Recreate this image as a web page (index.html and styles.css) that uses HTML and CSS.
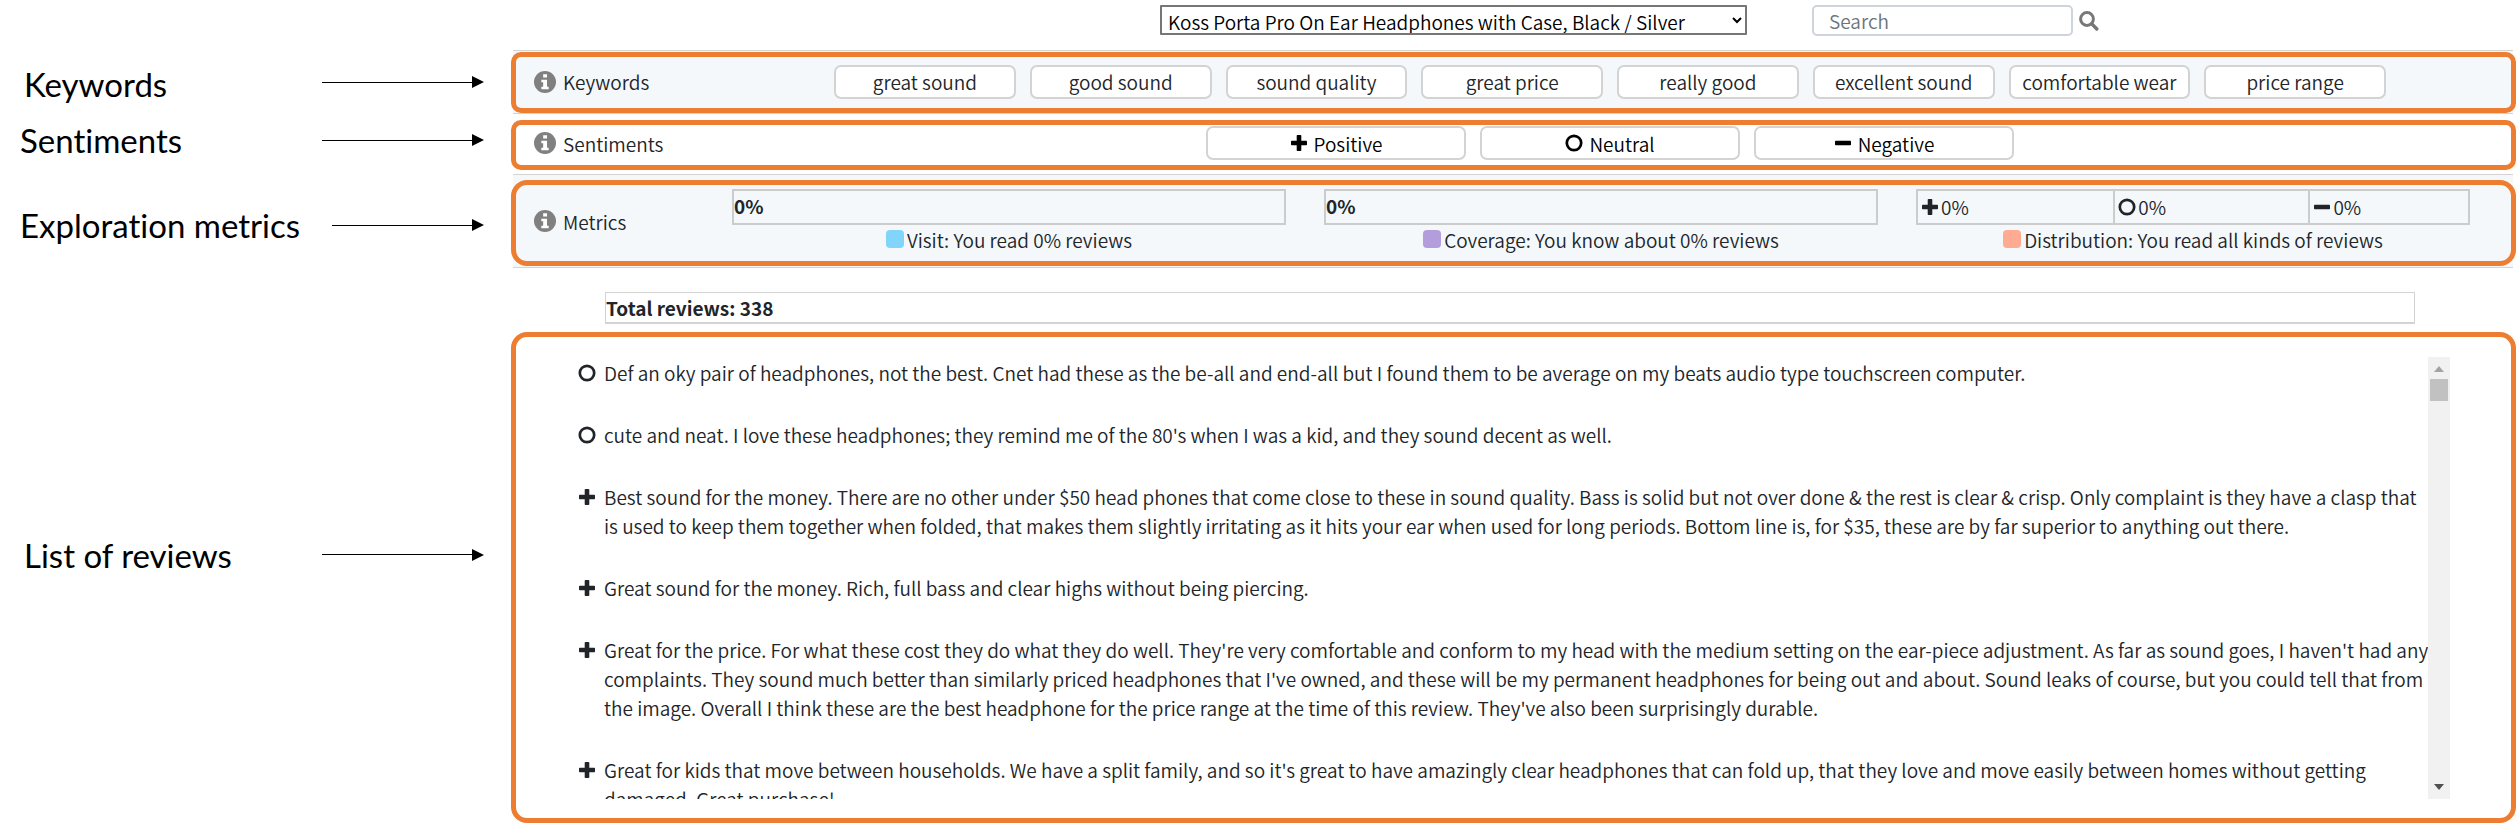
FILE: index.html
```html
<!DOCTYPE html>
<html lang="en">
<head>
<meta charset="utf-8">
<title>Review explorer</title>
<link rel="stylesheet" href="styles.css">
</head>
<body>
<svg class="defs" aria-hidden="true">
  <symbol id="info" viewBox="0 0 24 24"><circle cx="12" cy="12" r="12" fill="#808080"/><path fill="#fff" d="M10 3.5h4.2v3.7H10zM8 9.5h6.2v7.6H16V20H8v-2.9h2v-4.7H8z"/></symbol>
  <symbol id="plus" viewBox="0 0 18 18"><path fill="currentColor" d="M7.5 1h3q.8 0 .8.8v4.9h4.9q.8 0 .8.8v3q0 .8-.8.8h-4.9v4.9q0 .8-.8.8h-3q-.8 0-.8-.8v-4.9H1.8q-.8 0-.8-.8v-3q0-.8.8-.8h4.9V1.8q0-.8.8-.8z"/></symbol>
  <symbol id="ring" viewBox="0 0 18 18"><circle cx="9" cy="9" r="7.2" fill="none" stroke="currentColor" stroke-width="2.7"/></symbol>
  <symbol id="minus" viewBox="0 0 18 18"><rect x="1" y="6.7" width="16" height="4.6" rx=".8" fill="currentColor"/></symbol>
  <symbol id="search" viewBox="0 0 20 20"><circle cx="8" cy="8" r="6.4" fill="none" stroke="#777" stroke-width="3"/><path d="M12.6 12.6l5.2 5.4" stroke="#777" stroke-width="3.4" stroke-linecap="round"/></symbol>
</svg>
<main class="page">
  <header class="topbar">
    <select class="product" aria-label="Product"><option>Koss Porta Pro On Ear Headphones with Case, Black / Silver</option></select>
    <input class="search" type="search" placeholder="Search" aria-label="Search">
    <button class="search-button" aria-label="Search reviews"><svg class="search-icon"><use href="#search"/></svg></button>
  </header>

  <div class="note note-keywords"><span>Keywords</span><i class="arrow"></i></div>
  <section class="band band-keywords">
    <div class="box">
      <h2 class="label"><svg class="info"><use href="#info"/></svg>Keywords</h2>
      <div class="keywords">
        <button class="chip">great sound</button><button class="chip">good sound</button><button class="chip">sound quality</button><button class="chip">great price</button><button class="chip">really good</button><button class="chip">excellent sound</button><button class="chip">comfortable wear</button><button class="chip">price range</button>
      </div>
    </div>
  </section>

  <div class="note note-sentiments"><span>Sentiments</span><i class="arrow"></i></div>
  <section class="band band-sentiments">
    <div class="box">
      <h2 class="label"><svg class="info"><use href="#info"/></svg>Sentiments</h2>
      <div class="sentiments">
        <button class="chip tone"><svg class="mark"><use href="#plus"/></svg>Positive</button><button class="chip tone"><svg class="mark"><use href="#ring"/></svg>Neutral</button><button class="chip tone"><svg class="mark"><use href="#minus"/></svg>Negative</button>
      </div>
    </div>
  </section>

  <div class="note note-metrics"><span>Exploration metrics</span><i class="arrow"></i></div>
  <section class="band band-metrics">
    <div class="box box-round">
      <h2 class="label label-narrow"><svg class="info"><use href="#info"/></svg>Metrics</h2>
      <div class="metrics">
        <div class="metric"><div class="bar"><b>0%</b></div><p class="caption"><i class="swatch blue"></i>Visit: You read 0% reviews</p></div>
        <div class="metric"><div class="bar"><b>0%</b></div><p class="caption"><i class="swatch purple"></i>Coverage: You know about 0% reviews</p></div>
        <div class="metric"><div class="split"><span><svg class="mark"><use href="#plus"/></svg>0%</span><span><svg class="mark"><use href="#ring"/></svg>0%</span><span><svg class="mark"><use href="#minus"/></svg>0%</span></div><p class="caption"><i class="swatch coral"></i>Distribution: You read all kinds of reviews</p></div>
      </div>
    </div>
  </section>

  <div class="total"><b>Total reviews: 338</b></div>

  <div class="note note-reviews"><span>List of reviews</span><i class="arrow"></i></div>
  <section class="reviews">
    <div class="scroller">
      <ul class="list">
        <li class="review"><svg class="mark"><use href="#ring"/></svg><p>Def an oky pair of headphones, not the best. Cnet had these as the be-all and end-all but I found them to be average on my beats audio type touchscreen computer.</p></li>
        <li class="review"><svg class="mark"><use href="#ring"/></svg><p>cute and neat. I love these headphones; they remind me of the 80's when I was a kid, and they sound decent as well.</p></li>
        <li class="review"><svg class="mark"><use href="#plus"/></svg><p>Best sound for the money. There are no other under $50 head phones that come close to these in sound quality. Bass is solid but not over done &amp; the rest is clear &amp; crisp. Only complaint is they have a clasp that<br>is used to keep them together when folded, that makes them slightly irritating as it hits your ear when used for long periods. Bottom line is, for $35, these are by far superior to anything out there.</p></li>
        <li class="review"><svg class="mark"><use href="#plus"/></svg><p>Great sound for the money. Rich, full bass and clear highs without being piercing.</p></li>
        <li class="review"><svg class="mark"><use href="#plus"/></svg><p>Great for the price. For what these cost they do what they do well. They're very comfortable and conform to my head with the medium setting on the ear-piece adjustment. As far as sound goes, I haven't had any<br>complaints. They sound much better than similarly priced headphones that I've owned, and these will be my permanent headphones for being out and about. Sound leaks of course, but you could tell that from<br>the image. Overall I think these are the best headphone for the price range at the time of this review. They've also been surprisingly durable.</p></li>
        <li class="review"><svg class="mark"><use href="#plus"/></svg><p>Great for kids that move between households. We have a split family, and so it's great to have amazingly clear headphones that can fold up, that they love and move easily between homes without getting<br>damaged. Great purchase!</p></li>
      </ul>
      <div class="scrollbar" aria-hidden="true"><i class="up"></i><i class="thumb"></i><i class="down"></i></div>
    </div>
  </section>
</main>
</body>
</html>
```
FILE: styles.css
```css
* { box-sizing: border-box; }
body { margin: 0; background: #fff; color: #212529; font: 350 19px/29px "Noto Sans CJK SC", "Noto Sans", sans-serif; }
h2, p, ul { margin: 0; padding: 0; font-size: inherit; font-weight: inherit; }
button, input, select { font: inherit; color: inherit; }
.defs { position: absolute; width: 0; height: 0; }

.page { display: grid; grid-template-columns: 511px minmax(0, 1fr); }

.topbar { grid-column: 2; display: flex; align-items: flex-start; height: 50px; padding: 5px 0 0 649px; }
.product { width: 587px; height: 30px; padding: 0 2px; border: 2px solid #767676; border-radius: 1px; background: #fff; color: #000; }
.search { width: 261px; height: 31px; margin-left: 65px; padding: 0 15px; border: 2px solid #ced4da; border-radius: 5px; background: #fff; }
.search::placeholder { color: #6c757d; }
.search-button { height: 31px; margin-left: 6px; padding: 0; border: 0; background: none; }
.search-icon { display: block; width: 20px; height: 20px; }

.note { grid-column: 1; display: flex; align-items: center; gap: 20px; padding: 0 27px 0 24px; color: #000; font: 33px/40px Lato, sans-serif; font-variant-ligatures: none; }
.note span { flex: 0 0 auto; }
.note-keywords span { padding-top: 4px; }
.note-sentiments { padding-bottom: 8px; padding-left: 20px; }
.note-metrics { gap: 12px; padding-top: 8px; padding-left: 20px; }
.note-reviews { padding-bottom: 46px; }
.arrow { display: flex; align-items: center; width: 162px; margin-left: auto; }
.note-metrics .arrow { width: 152px; }
.arrow::before { content: ""; flex: 1; height: 1px; background: #000; }
.arrow::after { content: ""; border: 6px solid transparent; border-left: 12px solid #000; border-right: 0; }

.band { grid-column: 2; margin: 0 3px 0 2px; }
.box { display: flex; align-items: center; margin: 0 -3px 0 -2px; padding-left: 18px; border: 5px solid #ed7d31; border-radius: 10px; }
.box-round { border-radius: 16px; }
.band-keywords { padding-top: 1px; border-top: 1px solid #d3d3d3; border-bottom: 1px solid #d3d3d3; background: #f4f8fb; }
.band-keywords .box { height: 61px; padding-bottom: 2px; }
.band-sentiments { padding: 6px 0 4px; }
.band-sentiments .box { height: 50px; padding-bottom: 4px; }
.band-metrics { padding: 5px 0 1px; border-top: 1px solid #d3d3d3; border-bottom: 1px solid #d3d3d3; background: #f4f8fb; }
.band-metrics .box { height: 86px; padding-bottom: 4px; }

.label { flex: 0 0 300px; display: flex; align-items: center; gap: 7px; }
.label-narrow { flex-basis: 198px; }
.info { width: 22px; height: 22px; }
.mark { flex: none; width: 18px; height: 18px; }

.keywords { flex: 1; display: grid; grid-template-columns: repeat(8, minmax(0, 1fr)); gap: 14px; margin-right: 125px; }
.sentiments { flex: 1; display: flex; justify-content: center; gap: 14px; margin-right: 125px; }
.chip { height: 34px; padding: 0; border: 2px solid #d3d3d3; border-radius: 7px; background: #fff; white-space: nowrap; }
.tone { display: flex; align-items: center; justify-content: center; gap: 6px; width: 260px; color: #000; }

.metrics { flex: 1; display: grid; grid-template-columns: repeat(3, minmax(0, 1fr)); gap: 38px; margin-right: 41px; }
.bar, .split { height: 36px; border: 2px solid #ccc; }
.split { display: grid; grid-template-columns: 197fr 197fr 161fr; }
.split span { display: flex; align-items: center; gap: 2px; padding-left: 3px; }
.split span + span { border-left: 2px solid #ccc; }
.caption { display: flex; align-items: center; justify-content: center; gap: 3px; }
.swatch { width: 18px; height: 18px; border-radius: 4px; }
.blue { background: #81d4fa; }
.purple { background: #b39ddb; }
.coral { background: #ffab91; }

.total { grid-column: 2; height: 32px; margin: 24px 101px 8px 94px; border: 1px solid #d3d3d3; border-bottom-width: 2px; }

.reviews { grid-column: 2; padding: 20px 61px 19px 62px; border: 5px solid #ed7d31; border-radius: 16px; }
.scroller { display: flex; height: 442px; overflow: hidden; }
.list { flex: 1; min-width: 0; list-style: none; white-space: nowrap; }
.review { display: flex; align-items: flex-start; gap: 8px; margin-bottom: 33px; }
.review:first-child { margin-top: 1px; }
.review .mark { margin-top: 6px; }
.scrollbar { display: flex; flex-direction: column; align-items: center; width: 22px; height: 442px; padding: 9px 0; background: #f1f1f1; }
.up { border: 5px solid transparent; border-top: 0; border-bottom: 6px solid #a3a3a3; }
.thumb { width: 18px; height: 22px; margin-top: 7px; background: #c1c1c1; }
.down { margin-top: auto; border: 5px solid transparent; border-bottom: 0; border-top: 6px solid #505050; }
```
